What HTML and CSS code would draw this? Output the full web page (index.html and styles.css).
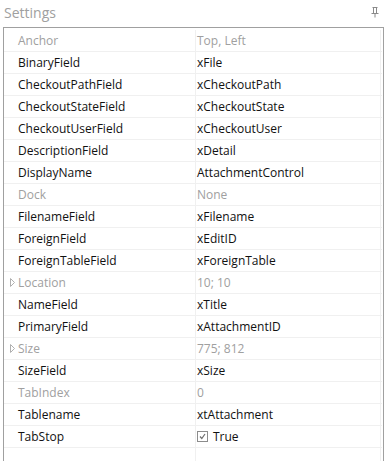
FILE: index.html
```html
<!DOCTYPE html>
<html>
<head>
<meta charset="utf-8">
<link rel="stylesheet" href="styles.css">
</head>
<body>
<div class="panel">
  <div class="titlebar">
    <span class="title">Settings</span>
    <svg class="pin" width="8" height="11" viewBox="0 0 8 11">
      <path d="M1.5 0.5H6.5M2.5 0.5V6.5M5.5 0.5V6.5M0.5 6.5H7.5M4 6.5V10.5" stroke="#8a8a8a" stroke-width="1" fill="none"/>
    </svg>
  </div>
  <div class="grid">
    <div class="row dis"><div class="name">Anchor</div><div class="val">Top, Left</div></div>
    <div class="row"><div class="name">BinaryField</div><div class="val">xFile</div></div>
    <div class="row"><div class="name">CheckoutPathField</div><div class="val">xCheckoutPath</div></div>
    <div class="row"><div class="name">CheckoutStateField</div><div class="val">xCheckoutState</div></div>
    <div class="row"><div class="name">CheckoutUserField</div><div class="val">xCheckoutUser</div></div>
    <div class="row"><div class="name">DescriptionField</div><div class="val">xDetail</div></div>
    <div class="row"><div class="name">DisplayName</div><div class="val">AttachmentControl</div></div>
    <div class="row dis"><div class="name">Dock</div><div class="val">None</div></div>
    <div class="row"><div class="name">FilenameField</div><div class="val">xFilename</div></div>
    <div class="row"><div class="name">ForeignField</div><div class="val">xEditID</div></div>
    <div class="row"><div class="name">ForeignTableField</div><div class="val">xForeignTable</div></div>
    <div class="row dis"><div class="name"><svg class="tri" width="11" height="9" viewBox="0 0 11 9"><path d="M3.5 0.5L7.5 4.5L3.5 8.5Z" stroke="#b0b0b0" stroke-width="1" fill="none"/></svg>Location</div><div class="val">10; 10</div></div>
    <div class="row"><div class="name">NameField</div><div class="val">xTitle</div></div>
    <div class="row"><div class="name">PrimaryField</div><div class="val">xAttachmentID</div></div>
    <div class="row dis"><div class="name"><svg class="tri" width="11" height="9" viewBox="0 0 11 9"><path d="M3.5 0.5L7.5 4.5L3.5 8.5Z" stroke="#b0b0b0" stroke-width="1" fill="none"/></svg>Size</div><div class="val">775; 812</div></div>
    <div class="row"><div class="name">SizeField</div><div class="val">xSize</div></div>
    <div class="row dis"><div class="name">TabIndex</div><div class="val">0</div></div>
    <div class="row"><div class="name">Tablename</div><div class="val">xtAttachment</div></div>
    <div class="row"><div class="name">TabStop</div><div class="val"><span class="check"><svg width="9" height="9" viewBox="0 0 9 9"><path d="M2 4.5L3.8 6.5L7 2" stroke="#707070" stroke-width="1.2" fill="none"/></svg></span>True</div></div>
    <div class="row"><div class="name"></div><div class="val"></div></div>
  </div>
</div>
</body>
</html>
```
FILE: styles.css
```css
html, body {
  margin: 0;
  padding: 0;
  background: #ffffff;
  overflow: hidden;
}
body {
  font-family: "Open Sans", "Noto Sans", sans-serif;
  font-size: 12px;
  color: #111111;
}
.panel {
  width: 388px;
  height: 461px;
  overflow: hidden;
}
.titlebar {
  height: 27px;
  display: flex;
  justify-content: space-between;
  align-items: flex-start;
  padding-left: 4px;
  padding-right: 9px;
  box-sizing: border-box;
}
.title {
  font-size: 14px;
  color: #a0a0a0;
  line-height: 27px;
  margin-top: -1px;
}
.pin {
  margin-top: 7px;
}
.grid {
  margin-left: 3px;
  width: 381px;
  box-sizing: border-box;
  border: 1px solid #a0a0a0;
  border-bottom: none;
  padding-top: 2px;
  padding-right: 1px;
}
.row {
  display: grid;
  grid-template-columns: 192px 185px;
  height: 22px;
  box-sizing: border-box;
  border-bottom: 1px solid #f0f0f0;
}
.name {
  display: flex;
  align-items: center;
  padding-left: 14px;
  border-right: 1px solid #f0f0f0;
  white-space: nowrap;
  line-height: 21px;
}
.tri {
  flex: none;
  margin-left: -11px;
}
.val {
  display: flex;
  align-items: center;
  padding-left: 1px;
  border-right: 1px solid #f0f0f0;
  white-space: nowrap;
  line-height: 21px;
}
.dis .name, .dis .val {
  color: #a0a0a0;
}
.check {
  width: 11px;
  height: 11px;
  box-sizing: border-box;
  border: 1px solid #8c8c8c;
  display: inline-flex;
  align-items: center;
  justify-content: center;
  margin-right: 5px;
}
.check svg {
  display: block;
}
```
